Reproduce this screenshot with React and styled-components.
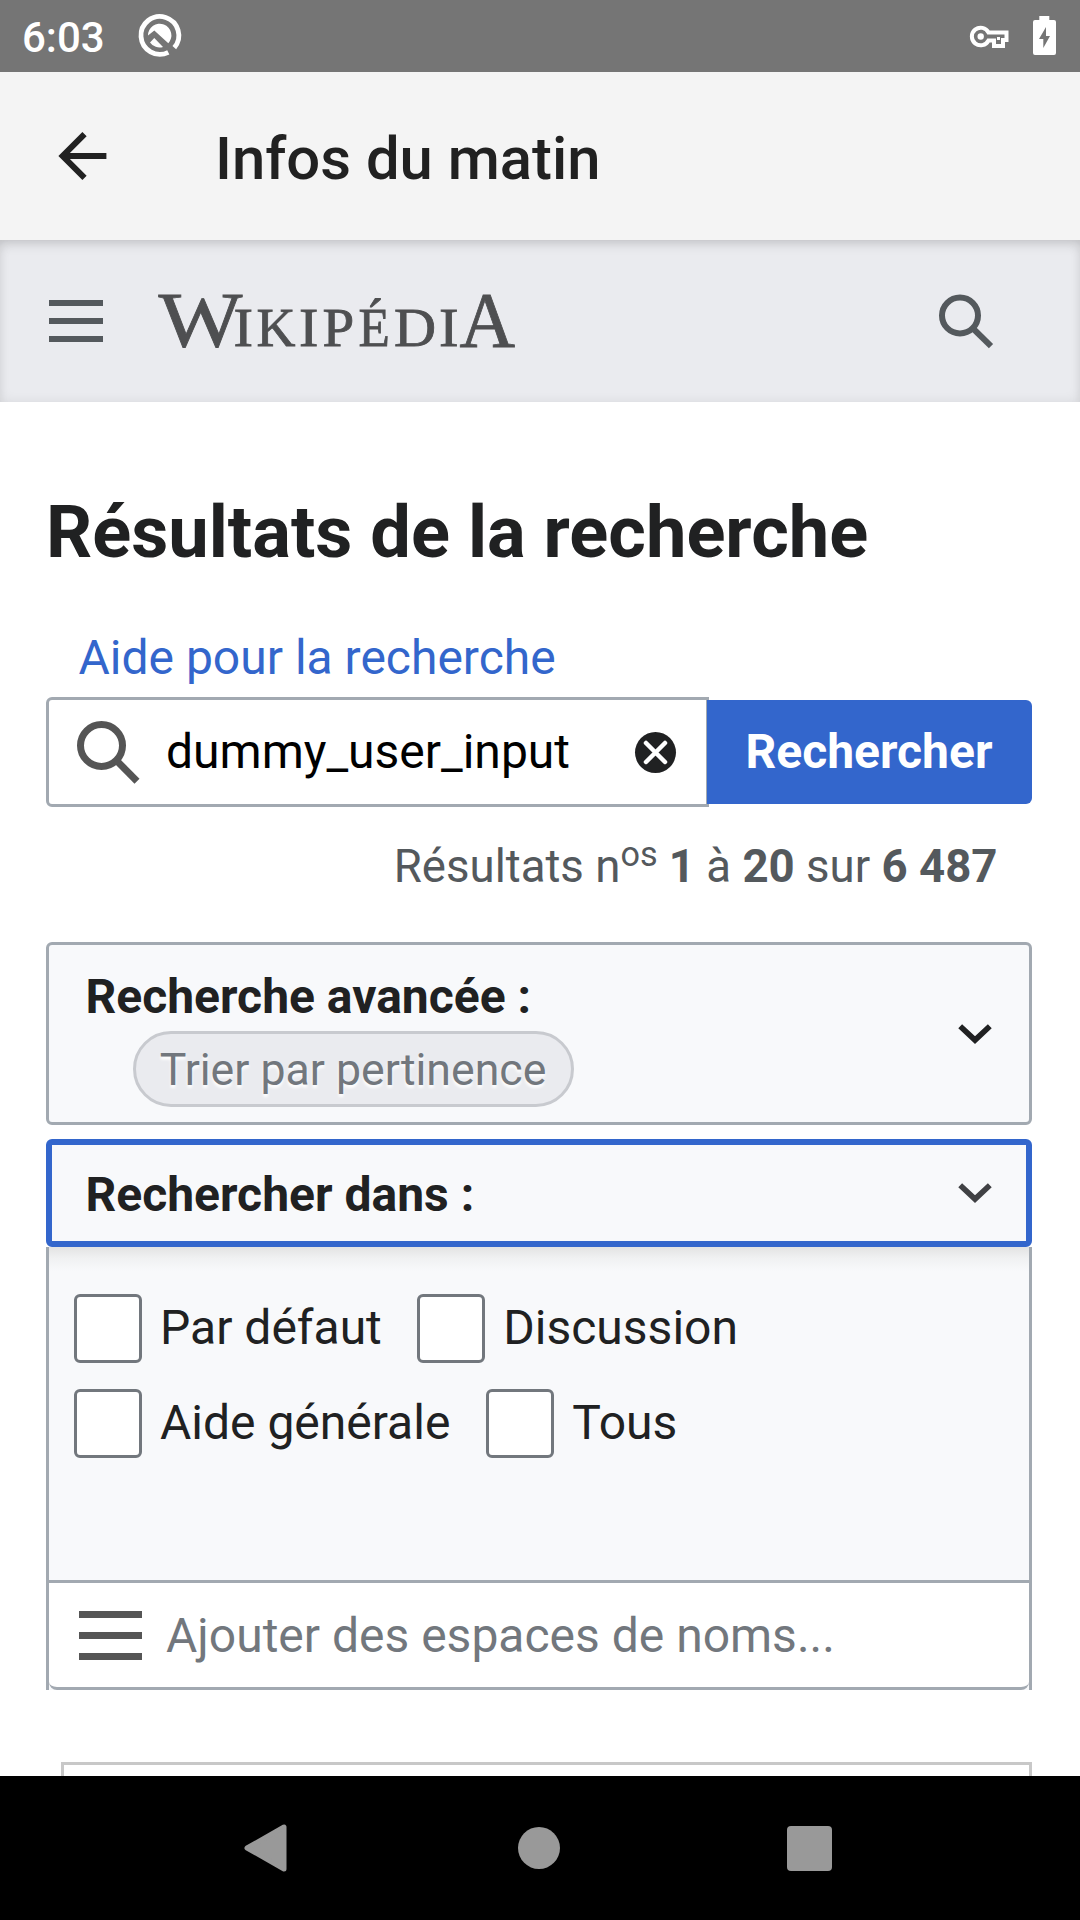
import React from "react";
import styled, { createGlobalStyle } from "styled-components";

const Global = createGlobalStyle`
  * { box-sizing: border-box; }
  body { margin: 0; background: #fff; }
`;

const Screen = styled.div`
  width: 1080px;
  height: 1920px;
  display: flex;
  flex-direction: column;
  overflow: hidden;
  background: #fff;
  color: #202122;
  font-family: Roboto, "Liberation Sans", sans-serif;
  font-size: 48px;
`;

const StatusBar = styled.div`
  flex: none;
  height: 72px;
  padding: 0 24px 0 22px;
  background: #757575;
  color: #fff;
  display: flex;
  align-items: flex-start;
`;

const Clock = styled.div`
  font-size: 42px;
  font-weight: 500;
  line-height: 76px;
  width: 116px;
  white-space: nowrap;
`;

const StatusIcons = styled.div`
  display: flex;
  margin-left: auto;
`;

const Icon = styled.svg`
  display: block;
  flex: none;
  overflow: visible;
  margin: ${(p) => p.$margin || "0"};
`;

const AppBar = styled.header`
  flex: none;
  height: 168px;
  padding-left: 47px;
  background: #f4f4f4;
  display: flex;
  align-items: center;
`;

const AppTitle = styled.div`
  margin: 6px 0 0 96px;
  font-size: 59.8px;
  font-weight: 500;
  line-height: 72px;
  color: #212121;
`;

const SiteHeader = styled.header`
  flex: none;
  height: 162px;
  padding: 0 87px 0 49px;
  background: #eaebef;
  box-shadow: inset 0 0 12px rgba(0, 0, 0, 0.08), inset 0 8px 14px -6px rgba(0, 0, 0, 0.16);
  display: flex;
  align-items: center;
`;

const Wordmark = styled.svg`
  display: block;
  margin: 0 auto 0 55px;
  overflow: visible;
  font-family: "Liberation Serif", serif;
  fill: #4e4f51;
  stroke: #4e4f51;
  stroke-width: 0.8px;
`;

const Content = styled.main`
  height: 1374px;
  flex: none;
  overflow: hidden;
  padding: 86px 48px 0 46px;
`;

const Heading = styled.h1`
  margin: 0;
  font-size: 72.2px;
  font-weight: 700;
  line-height: 90px;
  white-space: nowrap;
`;

const HelpLink = styled.a`
  display: block;
  margin: 50px 0 9px;
  padding-left: 32.5px;
  line-height: 60px;
  color: #36c;
`;

const SearchRow = styled.div`
  display: flex;
  align-items: center;
  height: 110px;
`;

const SearchField = styled.div`
  width: 663px;
  height: 110px;
  margin-right: -2px;
  padding: 0 30.5px 0 27.5px;
  border: 3px solid #a2a9b1;
  border-radius: 6px 0 0 6px;
  display: flex;
  align-items: center;
  background: #fff;
`;

const FieldText = styled.span`
  flex: 1;
  margin-left: ${(p) => p.$indent}px;
  padding-top: ${(p) => p.$drop || 0}px;
  line-height: 60px;
  white-space: nowrap;
  color: ${(p) => p.$color || "#000"};
`;

const SearchButton = styled.button`
  position: relative;
  width: 325px;
  height: 104px;
  padding: 0 1px 0 0;
  border: 0;
  border-radius: 0 6px 6px 0;
  background: #36c;
  color: #fff;
  font: 700 48px/100px Roboto, sans-serif;
`;

const ResultCount = styled.p`
  margin: 32px 0 47px;
  padding-right: 34.5px;
  text-align: right;
  font-size: 45.6px;
  line-height: 56px;
  color: #54595d;
  sup {
    font-size: 34.2px;
    line-height: 0;
    vertical-align: 16px;
  }
`;

const Panel = styled.section`
  display: flex;
  align-items: center;
  justify-content: space-between;
  height: ${(p) => p.$height}px;
  margin-top: ${(p) => (p.$active ? 14 : 0)}px;
  padding: 0 ${(p) => (p.$active ? 34.5 : 37.5)}px 0 ${(p) => (p.$active ? 33.5 : 36.5)}px;
  border: ${(p) => (p.$active ? "6px solid #36c" : "3px solid #a2a9b1")};
  border-radius: 6px;
  background: #f8f9fb;
`;

const PanelBody = styled.div`
  height: 133px;
  padding-top: 2px;
`;

const PanelTitle = styled.div`
  padding-top: ${(p) => p.$drop || 0}px;
  font-weight: 700;
  line-height: 56px;
  white-space: nowrap;
`;

const Chip = styled.div`
  width: 441px;
  height: 76px;
  margin: 6px 0 0 47px;
  border: 3px solid #c8cacf;
  border-radius: 38px;
  background: #eaebef;
  color: #72777d;
  font-size: 44.64px;
  line-height: 72px;
  text-align: center;
  text-shadow: 0 3px 3px #fff;
  white-space: nowrap;
`;

const Namespaces = styled.section`
  display: flex;
  flex-direction: column;
  height: 443px;
  border: solid #a2a9b1;
  border-width: 0 3px;
  background: linear-gradient(#e3e3e3, #f0f1f2 11px, #f8f9fb 24px);
`;

const CheckRows = styled.div`
  flex: 1;
  padding: 47px 0 0 24.5px;
  display: flex;
  flex-direction: column;
  gap: 26px;
`;

const CheckRow = styled.div`
  display: flex;
  gap: ${(p) => p.$gap}px;
`;

const CheckLabel = styled.label`
  display: flex;
  gap: 18px;
  line-height: 68px;
  white-space: nowrap;
`;

const CheckBox = styled.span`
  width: 68.5px;
  height: 69px;
  border: 3px solid #72777d;
  border-radius: 6px;
  background: #fff;
`;

const NamespaceField = styled.div`
  height: 110px;
  padding-left: 30px;
  border: solid #a2a9b1;
  border-width: 3px 0;
  border-radius: 0 0 8px 8px;
  background: #fff;
  display: flex;
  align-items: center;
`;

const NextCard = styled.div`
  margin: 72px 0 0 15px;
  height: 60px;
  border: 3px solid #c8c8c8;
`;

const NavBar = styled.nav`
  flex: none;
  height: 144px;
  padding: 0 248px 0 244px;
  background: #000;
  display: flex;
  align-items: center;
  justify-content: space-between;
`;

const Chevron = ({ color }) => (
  <Icon width="34" height="20" viewBox="0 0 34 20">
    <path d="M2.2 2.2 17 16.1 31.8 2.2" fill="none" stroke={color} strokeWidth="5.6" />
  </Icon>
);

const Bars = ({ width, height, bar, color }) => (
  <Icon width={width} height={height}>
    {[0, (height - bar) / 2, height - bar].map((y) => (
      <rect key={y} y={y} width={width} height={bar} fill={color} />
    ))}
  </Icon>
);

const Check = ({ children }) => (
  <CheckLabel>
    <CheckBox />
    <span>{children}</span>
  </CheckLabel>
);

// glyph, x, font size, advance width
const letters = [
  ["W", 158.6, 79, 84], ["I", 233.6, 55, 19.6], ["K", 256.4, 55, 39],
  ["I", 299, 55, 19.4], ["P", 322.6, 55, 31.7], ["É", 358.4, 55, 31.3],
  ["D", 394.1, 55, 42.1], ["I", 439, 55, 19.6], ["A", 459.6, 78, 55.6],
];

export default function App() {
  return (
    <Screen>
      <Global />
      <StatusBar>
        <Clock>6:03</Clock>
        <Icon width="43" height="43" viewBox="0 0 43 43" $margin="14px 0 0">
          <path d="M30.3 38.3A18.9 18.9 0 1 1 36.3 33.6" fill="none" stroke="#fff" strokeWidth="4.8" />
          <path d="M10 21.5A11.7 11.7 0 1 1 30.3 29.3L16.3 16.5Z" fill="#fff" />
          <path d="M12 28.5 16.3 24 25 33A11.7 11.7 0 0 1 12 28.5Z" fill="#fff" />
        </Icon>
        <StatusIcons>
          <Icon width="39" height="22" viewBox="0 0 39 22" $margin="26px 24px 0 0">
            <path
              d="M18.5 6.5A8.8 8.8 0 1 0 18.5 14.5H24V20H33V14H36.5V6.5Z"
              fill="none" stroke="#fff" strokeWidth="4"
            />
            <circle cx="10.7" cy="10.5" r="3.2" fill="#fff" />
            <path d="M27 12.5H30" stroke="#fff" strokeWidth="3" />
          </Icon>
          <Icon width="23" height="39" viewBox="0 0 23 39" $margin="16px 0 0">
            <path
              fillRule="evenodd" fill="#fff"
              d="M6.3 0h10v4H21a2 2 0 0 1 2 2v31a2 2 0 0 1-2 2H2a2 2 0 0 1-2-2V6a2 2 0 0 1 2-2h4.3ZM13 11 6 23h4.3v9L17 20h-4Z"
            />
          </Icon>
        </StatusIcons>
      </StatusBar>

      <AppBar>
        <Icon width="72" height="72" viewBox="0 0 24 24">
          <path fill="#212121" d="M20 11H7.83l5.59-5.59L12 4l-8 8 8 8 1.41-1.41L7.83 13H20v-2z" transform="translate(-.2 0)" />
        </Icon>
        <AppTitle>Infos du matin</AppTitle>
      </AppBar>

      <SiteHeader>
        <Bars width={54} height={42} bar={6} color="#54595d" />
        <Wordmark width="357" height="54" viewBox="158 293 357 54">
          <text y="345">
            {letters.map(([ch, x, size, advance], i) => (
              <tspan key={i} x={x} fontSize={size} textLength={advance} lengthAdjust="spacingAndGlyphs">{ch}</tspan>
            ))}
          </text>
        </Wordmark>
        <Icon width="54" height="54" viewBox="0 0 54 54">
          <circle cx="21" cy="21.5" r="18" fill="none" stroke="#54595d" strokeWidth="6" />
          <path d="M33.5 34 52 52.2" stroke="#54595d" strokeWidth="6" />
        </Icon>
      </SiteHeader>

      <Content>
        <Heading>Résultats de la recherche</Heading>
        <HelpLink>Aide pour la recherche</HelpLink>
        <SearchRow>
          <SearchField>
            <Icon width="63" height="63" viewBox="0 0 63 63">
              <circle cx="24.5" cy="24.5" r="21" fill="none" stroke="#555" strokeWidth="7" />
              <path d="M39 39 60 60.3" stroke="#555" strokeWidth="7" />
            </Icon>
            <FieldText $indent={26.5}>dummy_user_input</FieldText>
            <Icon width="41" height="41" viewBox="0 0 41 41">
              <circle cx="20.5" cy="20.5" r="20.5" fill="#202122" />
              <path d="M11 11 30 30M30 11 11 30" stroke="#fff" strokeWidth="4.5" strokeLinecap="round" />
            </Icon>
          </SearchField>
          <SearchButton>Rechercher</SearchButton>
        </SearchRow>
        <ResultCount>
          Résultats n<sup>os</sup> <b>1</b> à <b>20</b> sur <b>6 487</b>
        </ResultCount>

        <Panel $height={183}>
          <PanelBody>
            <PanelTitle>Recherche avancée :</PanelTitle>
            <Chip>Trier par pertinence</Chip>
          </PanelBody>
          <Chevron color="#202122" />
        </Panel>
        <Panel $height={108} $active>
          <PanelTitle $drop={3}>Rechercher dans :</PanelTitle>
          <Chevron color="#404144" />
        </Panel>

        <Namespaces>
          <CheckRows>
            <CheckRow $gap={35}>
              <Check>Par défaut</Check>
              <Check>Discussion</Check>
            </CheckRow>
            <CheckRow $gap={35.5}>
              <Check>Aide générale</Check>
              <Check>Tous</Check>
            </CheckRow>
          </CheckRows>
          <NamespaceField>
            <Bars width={63} height={49} bar={7} color="#555" />
            <FieldText $indent={24} $drop={2} $color="#72777d">Ajouter des espaces de noms...</FieldText>
          </NamespaceField>
        </Namespaces>
        <NextCard />
      </Content>

      <NavBar>
        <Icon width="43" height="48" viewBox="0 0 43 48">
          <path d="M3 24 40 3V45Z" fill="#999" stroke="#999" strokeWidth="5" strokeLinejoin="round" />
        </Icon>
        <Icon width="42" height="42" $margin="0 0 0 3px"><circle cx="21" cy="21" r="21" fill="#999" /></Icon>
        <Icon width="45" height="45"><rect width="45" height="45" rx="4" fill="#999" /></Icon>
      </NavBar>
    </Screen>
  );
}
